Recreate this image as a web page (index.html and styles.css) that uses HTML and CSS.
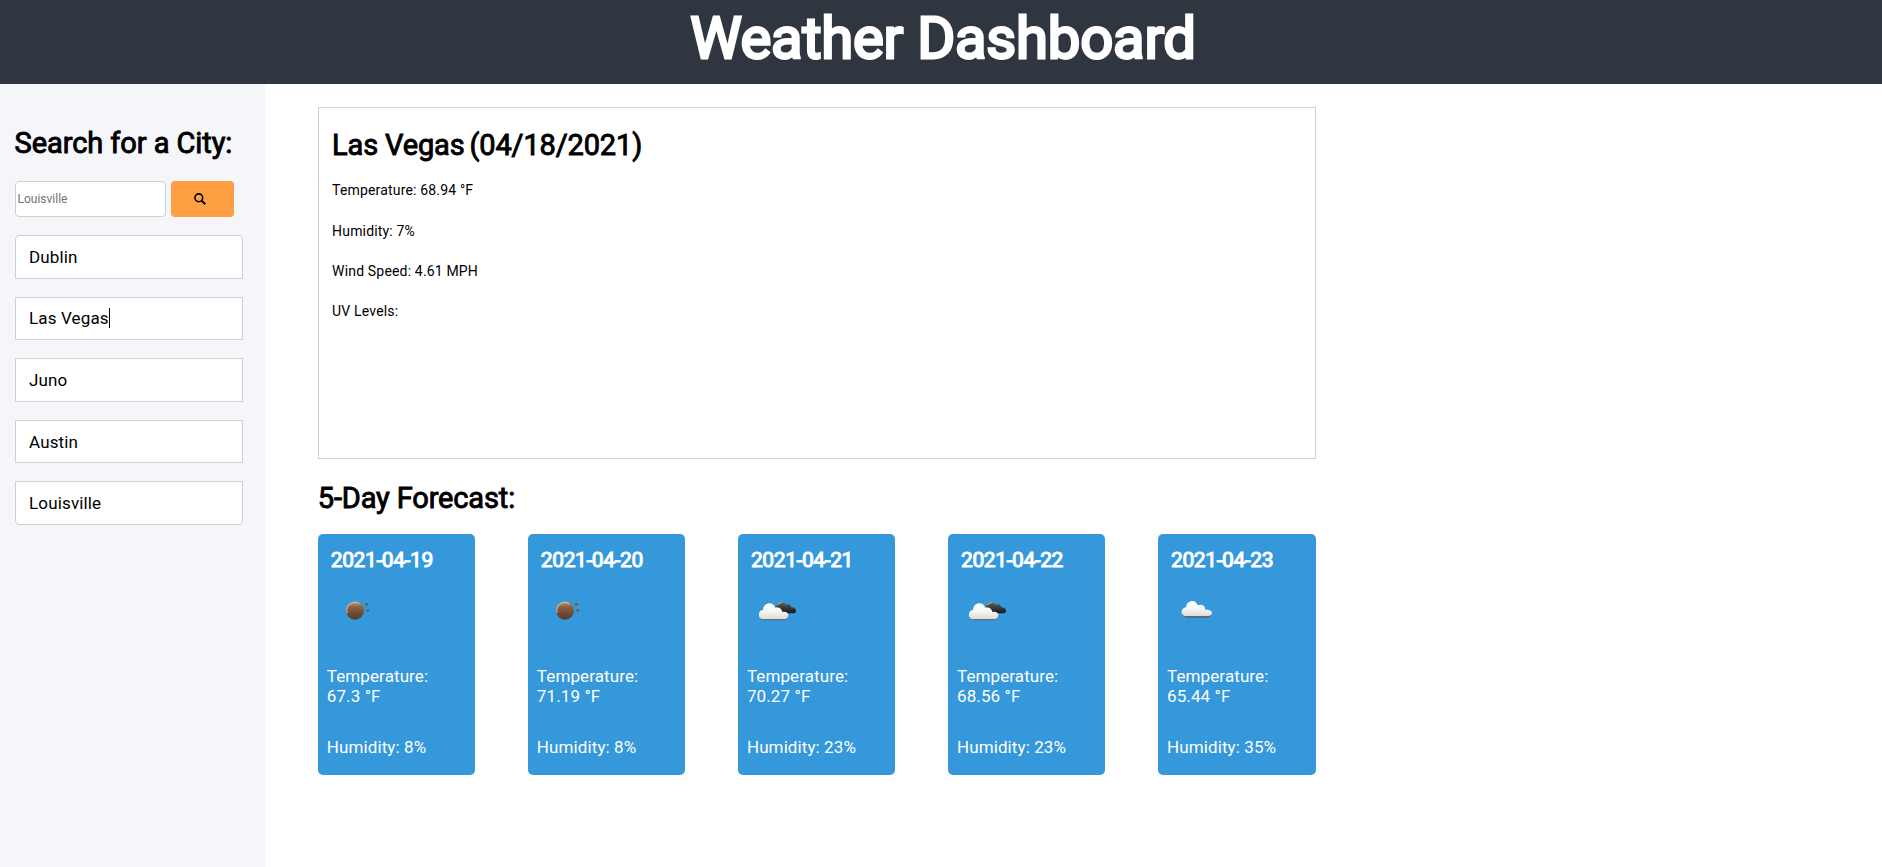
FILE: index.html
```html
<!DOCTYPE html>
<html lang="en">
<head>
<meta charset="utf-8">
<title>Weather Dashboard</title>
<link rel="stylesheet" href="styles.css">
</head>
<body>
<svg class="defs" aria-hidden="true">
  <defs>
    <linearGradient id="white" x1="0" y1="0" x2="0" y2="1"><stop offset="0" stop-color="#fff"/><stop offset=".5" stop-color="#f7f7f7"/><stop offset="1" stop-color="#dcdcdc"/></linearGradient>
    <linearGradient id="dark" x1="0" y1="0" x2="0" y2="1"><stop offset="0" stop-color="#77736f"/><stop offset=".3" stop-color="#4a4a4a"/><stop offset="1" stop-color="#161616"/></linearGradient>
    <linearGradient id="moon" x1="0" y1="0" x2="0" y2="1"><stop offset="0" stop-color="#c49a7c"/><stop offset=".3" stop-color="#8a5f42"/><stop offset="1" stop-color="#543a29"/></linearGradient>
    <symbol id="clear" viewBox="0 0 240 180">
      <circle cx="105" cy="92" r="27" fill="url(#moon)"/>
      <path d="M82 99A24 24 0 0 1 118 71" fill="none" stroke="#dfc1ac" stroke-width="4" opacity=".75"/>
      <rect x="135" y="69" width="9" height="8" rx="2" fill="#70594d"/><rect x="139" y="88" width="8" height="7" rx="2" fill="#70594d"/>
    </symbol>
    <symbol id="broken" viewBox="0 0 240 180">
      <path d="M109 80C109 69 117 64 126 66Q134 67 138 74Q151 70 154 82C164 82 168 87 168 92Q168 100 158 100H130Z" fill="url(#dark)"/>
      <path d="M112 76Q115 67 127 67" fill="none" stroke="#aaa39c" stroke-width="4"/>
      <path d="M60 112Q65 121 75 121H133Q143 121 145 112Z" fill="#697078"/>
      <path d="M70 117C58 117 56 108 57 101C58 93 64 90 69 90C70 75 81 69 91 70C98 71 103 76 106 84C116 80 125 85 127 96C139 94 145 100 145 106C145 113 140 117 134 117Z" fill="url(#white)"/>
    </symbol>
    <symbol id="cloud" viewBox="0 0 240 180">
      <path d="M69 105Q74 114 82 114H144Q152 113 154 105Z" fill="#606b74"/>
      <path d="M77 108C64 107 62 94 68 87Q72 82 78 82C79 69 89 62 100 63Q109 65 113 76Q121 72 129 76Q136 80 136 89Q147 87 154 94C159 101 153 107 147 108Z" fill="url(#white)"/>
    </symbol>
  </defs>
</svg>
<header class="header"><h1>Weather Dashboard</h1></header>
<div class="page">
  <aside class="sidebar">
    <h2 class="search-title">Search for a City:</h2>
    <form class="search">
      <input class="search-input" type="text" placeholder="Louisville">
      <button class="search-button" type="button" aria-label="Search"><svg class="search-icon" viewBox="0 0 12 12"><circle cx="4.8" cy="4.8" r="3.9" fill="none" stroke="#000" stroke-width="1.6"/><path d="M7.6 7.6l3.7 3.7" stroke="#000" stroke-width="2"/></svg></button>
    </form>
    <ul class="history">
      <li>Dublin</li>
      <li>Las Vegas<span class="caret"></span></li>
      <li>Juno</li>
      <li>Austin</li>
      <li>Louisville</li>
    </ul>
  </aside>
  <main class="main">
    <section class="current">
      <div class="current-head"><h2 class="city">Las Vegas</h2><h2 class="today">(04/18/2021)</h2></div>
      <p>Temperature: 68.94 °F</p>
      <p>Humidity: 7%</p>
      <p>Wind Speed: 4.61 MPH</p>
      <p>UV Levels:</p>
    </section>
    <h2 class="forecast-title">5-Day Forecast:</h2>
    <section class="forecast">
      <article class="card"><h3>2021-04-19</h3><svg class="weather"><use href="#clear"/></svg><p>Temperature: 67.3 °F</p><p>Humidity: 8%</p></article>
      <article class="card"><h3>2021-04-20</h3><svg class="weather"><use href="#clear"/></svg><p>Temperature: 71.19 °F</p><p>Humidity: 8%</p></article>
      <article class="card"><h3>2021-04-21</h3><svg class="weather"><use href="#broken"/></svg><p>Temperature: 70.27 °F</p><p>Humidity: 23%</p></article>
      <article class="card"><h3>2021-04-22</h3><svg class="weather"><use href="#broken"/></svg><p>Temperature: 68.56 °F</p><p>Humidity: 23%</p></article>
      <article class="card"><h3>2021-04-23</h3><svg class="weather"><use href="#cloud"/></svg><p>Temperature: 65.44 °F</p><p>Humidity: 35%</p></article>
    </section>
  </main>
</div>
</body>
</html>
```
FILE: styles.css
```css
* { box-sizing: border-box; }
body { margin: 0; height: 867px; overflow: hidden; display: flex; flex-direction: column; background: #fff; color: #000; font-family: Roboto, sans-serif; }
h1, h2, h3, p, ul { margin: 0; padding: 0; font-weight: 400; }
.defs { position: absolute; width: 0; height: 0; }

.header { height: 84px; background: #2f3640; color: #fff; text-align: center; }
.header h1 { padding: 3px 0 0 4px; font-size: 58px; line-height: 70px; letter-spacing: -.2px; -webkit-text-stroke: 2.8px #fff; }

.page { flex: 1; display: flex; }
.sidebar { width: 265px; padding: 42px 22px 0 15px; background: #f5f6fa; }
.search-title, .current-head h2, .forecast-title { font-size: 29px; line-height: 34px; letter-spacing: -.15px; -webkit-text-stroke: .9px #000; }
.search-title { margin-left: -.5px; letter-spacing: -.07px; white-space: nowrap; }
.search { display: flex; gap: 5px; margin: 21px 0 18px; }
.search-input { width: 151px; height: 36px; padding: 1px 2px 1px 1.5px; border: 1px solid #ced0d4; border-radius: 4px; background: #fff; font: 12px Roboto, sans-serif; }
.search-input::placeholder { color: #757575; }
.search-button { width: 63px; height: 36px; padding: 0 5px 1px 0; border: 0; border-radius: 4px; background: #ff9f43; display: flex; align-items: center; justify-content: center; }
.search-icon { width: 12px; height: 12px; }

.history { list-style: none; display: flex; flex-direction: column; gap: 18px; }
.history li { display: flex; height: 43.5px; padding: 11px 13px; border: 1px solid #ced0d4; background: #fff; font-size: 17px; line-height: 20px; letter-spacing: .15px; }
.history li:first-child { border-radius: 4px 4px 0 0; }
.history li:nth-child(2) { padding-top: 10px; }
.history li:last-child { border-radius: 0 0 4px 4px; }
.caret { width: 1px; height: 20px; background: #000; }

.main { width: 1050.6px; padding: 23px 0 0 52.8px; }
.current { height: 352px; padding: 20px 13.3px; border: 1px solid #ced0d4; }
.current-head { display: flex; gap: 5px; margin-bottom: 20px; }
.current p { height: 40.3px; font-size: 14px; line-height: 16px; letter-spacing: .17px; }
.current p:nth-of-type(2) { padding-top: .7px; }
.forecast-title { margin: 22px 0 19px; }
.forecast { display: flex; justify-content: space-between; }
.card { width: 157.5px; height: 241px; padding: 14px 9px 0; border-radius: 5px; background: #3498db; color: #fff; }
.card h3 { margin-left: 4px; font-size: 21px; line-height: 24px; letter-spacing: -.4px; -webkit-text-stroke: 1px #fff; }
.weather { display: block; width: 80px; height: 60px; margin: 8px 0 26px -7px; }
.card p { width: 115px; margin-bottom: 31px; font-size: 17px; line-height: 20px; letter-spacing: .1px; }
```
